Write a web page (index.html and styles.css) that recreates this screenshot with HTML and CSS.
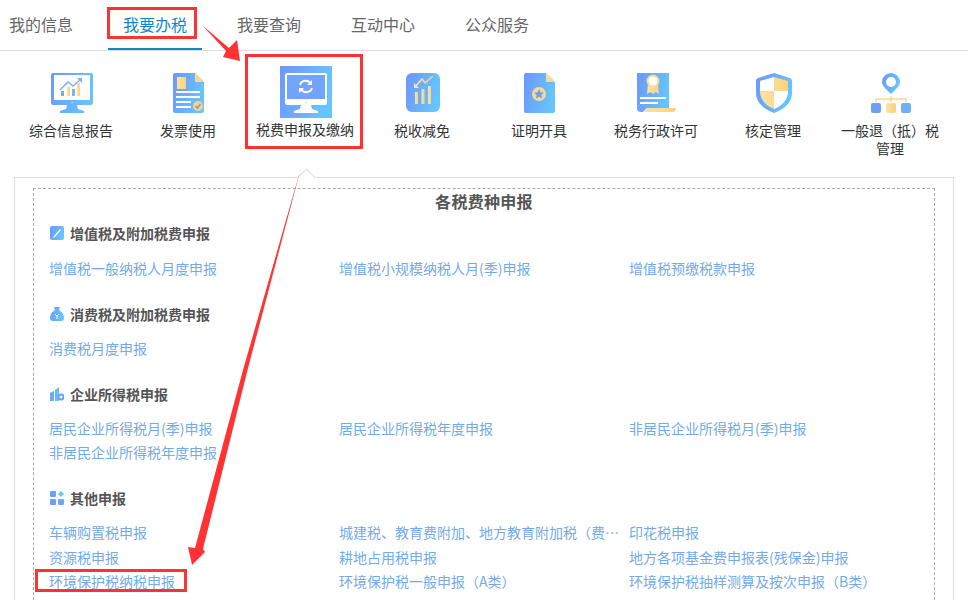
FILE: index.html
```html
<!DOCTYPE html>
<html lang="zh-CN">
<head>
<meta charset="utf-8">
<title>我要办税</title>
<link rel="stylesheet" href="styles.css">
</head>
<body>
<svg width="0" height="0" class="defs">
  <defs>
    <linearGradient id="blue" x1="0" y1="0" x2="1" y2="0.3"><stop offset="0" stop-color="#6c97fb"/><stop offset="1" stop-color="#66c4ff"/></linearGradient>
    <linearGradient id="gold" x1="0" y1="0" x2="1" y2="0"><stop offset="0" stop-color="#fbe3a6"/><stop offset="1" stop-color="#fbd27a"/></linearGradient>
  </defs>
</svg>
<nav class="tabs">
  <a class="tab first">我的信息</a>
  <a class="tab active">我要办税</a>
  <a class="tab">我要查询</a>
  <a class="tab">互动中心</a>
  <a class="tab">公众服务</a>
</nav>
<section class="modules">
  <div class="module">
    <svg class="ico" width="42" height="40" viewBox="0 0 42 40">
      <path fill="url(#blue)" d="M2 0h38a2 2 0 0 1 2 2v28a2 2 0 0 1-2 2H26l1 4 6 2v2H9v-2l6-2 1-4H2a2 2 0 0 1-2-2V2a2 2 0 0 1 2-2z"/>
      <rect x="3" y="2" width="36" height="25" fill="#fff"/>
      <rect x="10" y="18" width="3" height="5" fill="#7aa5fb"/><rect x="16" y="14" width="3" height="9" fill="url(#gold)"/><rect x="21" y="16" width="3" height="7" fill="#7ab4fb"/><rect x="26" y="10" width="3" height="13" fill="url(#gold)"/>
      <path d="M9 17l8-8 5 4 7-6" fill="none" stroke="#7cb0fb" stroke-width="1.500"/><path d="M26 5h5v5z" fill="#7cb0fb"/>
      <rect x="20.500" y="29" width="1.500" height="1" fill="#fbd27a"/>
    </svg>
    <span class="label">综合信息报告</span>
  </div>
  <div class="module">
    <svg class="ico" width="32" height="40" viewBox="0 0 32 40">
      <path fill="url(#blue)" d="M2 0h20l9 9v29a2 2 0 0 1-2 2H2a2 2 0 0 1-2-2V2a2 2 0 0 1 2-2z"/>
      <path fill="#f9d98f" d="M22 0l9 9h-9z"/>
      <rect x="4" y="4" width="9" height="12" fill="url(#gold)"/>
      <path d="M3 19h24M3 24h24M3 29h15M3 34h15" stroke="#fff" stroke-width="2"/>
      <circle cx="25" cy="33" r="5" fill="#f9d27c"/><path d="M22.500 33l2 2 3-4" fill="none" stroke="#6fa0f0" stroke-width="1.500"/>
    </svg>
    <span class="label">发票使用</span>
  </div>
  <div class="module">
    <svg class="ico big" width="52" height="52" viewBox="0 0 52 52">
      <rect width="52" height="52" fill="url(#blue)"/>
      <path fill="#fff" d="M7 7h38a2 2 0 0 1 2 2v28a2 2 0 0 1-2 2H31l1 4 6 2v2H14v-2l6-2 1-4H7a2 2 0 0 1-2-2V9a2 2 0 0 1 2-2z"/>
      <rect x="7" y="9" width="38" height="24" fill="#71a4fc"/>
      <path d="M20 19a6 6 0 0 1 11-1M32 22a6 6 0 0 1-11 1" fill="none" stroke="#fff" stroke-width="2"/>
      <path d="M32 14v5h-5zM19 27v-5h5z" fill="#fff"/>
      <rect x="25" y="36" width="2" height="1" fill="#fbd27a"/>
    </svg>
    <span class="label">税费申报及缴纳</span>
  </div>
  <div class="module">
    <svg class="ico" width="34" height="40" viewBox="0 0 34 40">
      <rect width="34" height="39" rx="6" fill="url(#blue)"/>
      <rect x="9" y="19" width="3" height="12" fill="url(#gold)"/><rect x="15.500" y="16" width="3" height="15" fill="url(#gold)"/><rect x="22" y="13" width="3" height="18" fill="url(#gold)"/>
      <path d="M9 14l7-8 3 4 8-7" fill="none" stroke="url(#gold)" stroke-width="1.500"/>
      <path d="M8 10v5h5z" fill="#fbe3a6"/>
    </svg>
    <span class="label">税收减免</span>
  </div>
  <div class="module">
    <svg class="ico" width="31" height="40" viewBox="0 0 31 40">
      <path fill="url(#blue)" d="M2 0h20l9 9v29a2 2 0 0 1-2 2H2a2 2 0 0 1-2-2V2a2 2 0 0 1 2-2z"/>
      <path fill="#f9d98f" d="M22 0l9 9h-9z"/>
      <circle cx="15" cy="21" r="7" fill="#f9d98f"/>
      <path fill="#6f9ff5" d="M15 16l1.500 3.300 3.500.4-2.600 2.400.7 3.500-3.100-1.800-3.100 1.800.7-3.500-2.600-2.400 3.500-.4z"/>
    </svg>
    <span class="label">证明开具</span>
  </div>
  <div class="module">
    <svg class="ico" width="40" height="40" viewBox="0 0 40 40">
      <path fill="url(#blue)" d="M0 0h32v35H10l-4 4H4q-4 0-4-4z"/>
      <path fill="url(#gold)" d="M6 39q3-1 4-4h29q0 3-3 4z"/>
      <path fill="url(#gold)" d="M11 10L10 21l3.500-2 2.500 2 2.500-2 3.500 2-1-11z"/>
      <circle cx="16" cy="8" r="6.500" fill="#f9d98f"/><circle cx="16" cy="8" r="4.500" fill="#fff"/>
      <path d="M3 25h26M3 30h18" stroke="#fff" stroke-width="2"/>
    </svg>
    <span class="label">税务行政许可</span>
  </div>
  <div class="module">
    <svg class="ico" width="36" height="40" viewBox="0 0 36 40">
      <path fill="url(#blue)" d="M18 0l16 5q2 .5 2 3v12q0 13-18 20Q0 33 0 20V8q0-2.500 2-3z"/>
      <path fill="#fff" d="M18 4L4 8v10h14zM18 18h14q0 12-14 18z"/>
      <path fill="url(#gold)" d="M18 4l14 4v10H18zM4 18h14v18Q4 30 4 18z"/>
    </svg>
    <span class="label">核定管理</span>
  </div>
  <div class="module">
    <svg class="ico" width="40" height="40" viewBox="0 0 40 40">
      <path fill="url(#blue)" d="M20 0a9 9 0 0 1 9 9c0 4-5 8-9 12-4-4-9-8-9-12a9 9 0 0 1 9-9z"/>
      <circle cx="20" cy="9" r="5" fill="#fff"/>
      <path d="M20 23v6M5 29v-3h30v3" fill="none" stroke="#f9d98f" stroke-width="1.500"/>
      <rect y="30" width="10" height="10" rx="2" fill="#6f9ff9"/><rect x="15" y="30" width="10" height="10" rx="2" fill="url(#gold)"/><rect x="30" y="30" width="10" height="10" rx="2" fill="#6fb0fd"/>
    </svg>
    <span class="label">一般退（抵）税管理</span>
  </div>
</section>
<main class="panel">
  <div class="notch"></div>
  <div class="inner">
    <h1 class="title">各税费种申报</h1>
    <section class="group">
      <h2 class="heading">
        <svg class="hico" width="14" height="14" viewBox="0 0 14 14"><rect width="14" height="14" rx="2" fill="url(#blue)"/><path d="M4 10l6-7 1 1-6 7-2 1z" fill="#fff"/></svg>
        增值税及附加税费申报
      </h2>
      <div class="links">
        <a>增值税一般纳税人月度申报</a>
        <a>增值税小规模纳税人月(季)申报</a>
        <a>增值税预缴税款申报</a>
      </div>
    </section>
    <section class="group">
      <h2 class="heading">
        <svg class="hico" width="14" height="14" viewBox="0 0 14 14"><path fill="url(#blue)" d="M4 0h6L9 3q5 3 5 8 0 3-3 3H3q-3 0-3-3 0-5 5-8z"/><path d="M5 7l2 2 2-2M7 9v3" stroke="#fff" fill="none"/></svg>
        消费税及附加税费申报
      </h2>
      <div class="links">
        <a>消费税月度申报</a>
      </div>
    </section>
    <section class="group">
      <h2 class="heading">
        <svg class="hico" width="14" height="14" viewBox="0 0 14 14"><path fill="url(#blue)" d="M0 6l4-2v10H0zM5 3l4-3v14H5z"/><circle cx="11" cy="10" r="3.500" fill="#6f9ff9"/><circle cx="11" cy="10" r="1.500" fill="#fff"/></svg>
        企业所得税申报
      </h2>
      <div class="links">
        <a>居民企业所得税月(季)申报</a>
        <a>居民企业所得税年度申报</a>
        <a>非居民企业所得税月(季)申报</a>
        <a>非居民企业所得税年度申报</a>
      </div>
    </section>
    <section class="group">
      <h2 class="heading">
        <svg class="hico" width="14" height="14" viewBox="0 0 14 14"><rect width="6" height="6" rx="1" fill="#6f9ff9"/><path d="M11 0l3 3-3 3-3-3z" fill="#66c4ff"/><rect y="8" width="6" height="6" rx="1" fill="#6f9ff9"/><rect x="8" y="8" width="6" height="6" rx="1" fill="#6fa8fb"/></svg>
        其他申报
      </h2>
      <div class="links">
        <a>车辆购置税申报</a>
        <a>城建税、教育费附加、地方教育附加税（费）申报</a>
        <a>印花税申报</a>
        <a>资源税申报</a>
        <a>耕地占用税申报</a>
        <a>地方各项基金费申报表(残保金)申报</a>
        <a>环境保护税纳税申报</a>
        <a>环境保护税一般申报（A类）</a>
        <a>环境保护税抽样测算及按次申报（B类）</a>
        <a>烟叶税申报</a>
        <a>房产税城镇土地使用税申报</a>
        <a>车船税税源明细申报</a>
      </div>
    </section>
  </div>
</main>
<div class="mark mark-tab"></div>
<div class="mark mark-module"></div>
<div class="mark mark-link"></div>
<svg class="arrows" width="968" height="600" viewBox="0 0 968 600">
  <polygon fill="#f33" points="202,25 229,48 237,40 240,61 223,57 226,51"/>
  <polygon fill="#f33" points="301,168 247.500,370 203,549 205,552 192,565 188,547 195,548 243,370"/>
</svg>
</body>
</html>
```
FILE: styles.css
```css
html, body {
  margin: 0;
  padding: 0;
  height: 600px;
  overflow: hidden;
  background: #fff;
  font-family: "Noto Sans CJK SC", "Liberation Sans", sans-serif;
  font-size: 14px;
}
body { position: relative; }
.defs { position: absolute; }

.tabs {
  display: flex;
  gap: 20px;
  height: 50px;
  border-bottom: 1px solid #ddd;
  box-sizing: content-box;
}
.tab {
  padding: 0 15px;
  height: 50px;
  box-sizing: border-box;
  line-height: 49px;
  font-size: 16px;
  color: #666;
}
.tab.first { padding-left: 9px; }
.tab.active {
  color: #0f88c8;
  border-bottom: 2px solid #0f88c8;
}

.modules {
  display: grid;
  grid-template-columns: repeat(8, 117px);
  padding: 15px 0 0 13px;
  height: 111px;
  box-sizing: content-box;
}
.module {
  display: flex;
  flex-direction: column;
  align-items: center;
  padding: 7px 8px 0;
  text-align: center;
  color: #333;
  line-height: 18px;
}
.ico { height: 40px; flex: none; margin-bottom: 8px; }
.ico.big { height: 52px; margin: -7px 0 2px; }
.label { display: block; margin-left: -1px; }

.panel {
  position: relative;
  margin: 0 14px;
  border: 1px solid #ddd;
  padding: 10px 18px 0;
  height: 500px;
}
.notch {
  position: absolute;
  left: 285px;
  top: -7px;
  width: 12px;
  height: 12px;
  background: #fff;
  border-left: 1px solid #ddd;
  border-top: 1px solid #ddd;
  transform: rotate(45deg);
}
.inner {
  position: relative;
  border: 1px dashed #aaa;
  padding: 0 15px;
  height: 480px;
}
.title {
  margin: 0;
  font-size: 16px;
  font-weight: 700;
  letter-spacing: 0.3px;
  line-height: 25px;
  text-align: center;
  color: #555;
}
.group { margin-bottom: 14.6px; }
.heading {
  margin: 0 0 10px;
  display: flex;
  align-items: center;
  gap: 6px;
  padding: 7px 0 0 1px;
  font-size: 14px;
  font-weight: 700;
  line-height: 24px;
  color: #555;
}
.group:first-of-type .heading { margin-bottom: 11px; }
.hico { flex: none; }
.links {
  display: grid;
  grid-template-columns: repeat(3, 290px);
  row-gap: 0;
}
.links a {
  display: block;
  padding-right: 10px;
  line-height: 24.4px;
  color: #72aaea;
  white-space: nowrap;
  overflow: hidden;
  text-overflow: ellipsis;
}

.mark {
  position: absolute;
  box-sizing: border-box;
  border: 3px solid #f33;
}
.mark-tab { left: 107px; top: 7px; width: 90px; height: 32px; }
.mark-module { left: 245px; top: 54px; width: 118px; height: 95px; }
.mark-link { left: 35px; top: 569px; width: 152px; height: 23px; }
.arrows { position: absolute; left: 0; top: 0; pointer-events: none; }
```
